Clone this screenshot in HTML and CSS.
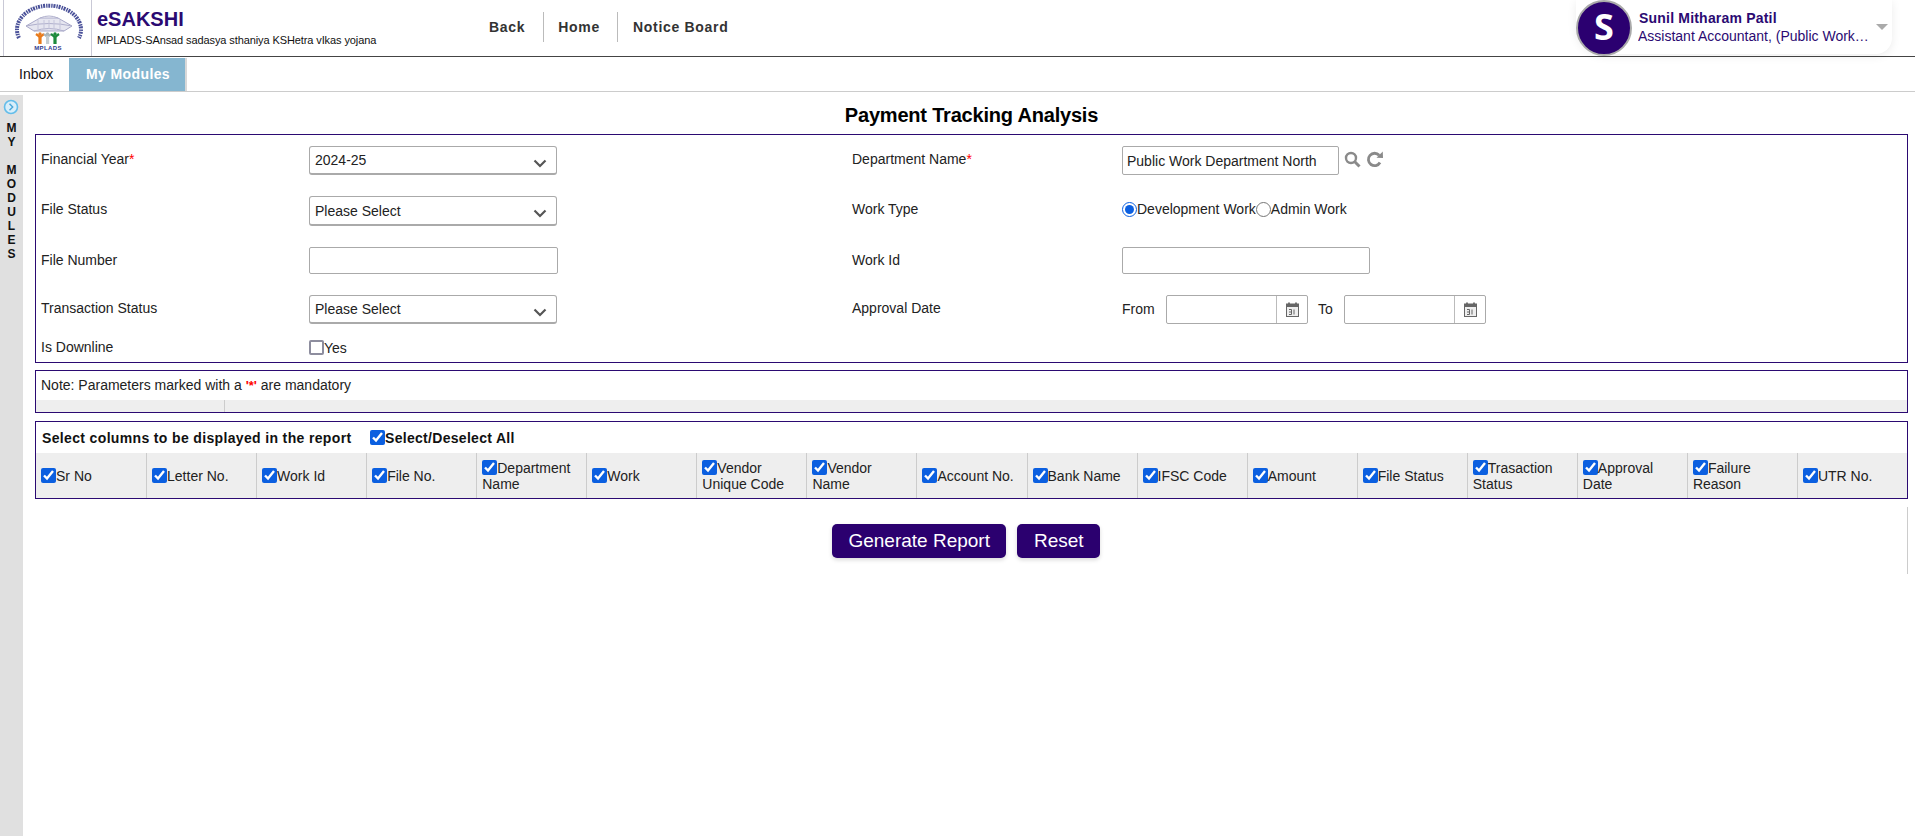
FILE: index.html
```html
<!DOCTYPE html>
<html lang="en">
<head>
<meta charset="utf-8">
<title>Payment Tracking Analysis</title>
<link rel="stylesheet" href="styles.css">
</head>
<body>
<header class="topbar">
  <div class="logo">
    <svg width="87" height="54" viewBox="0 0 87 54">
      <path d="M15 38 A 32 24 0 1 1 75 38" fill="none" stroke="#4a5199" stroke-width="4" stroke-dasharray="2 1 1.4 0.8"/>
      <path d="M22 26 L36 18 H54 L68 26 L60 31 H30 Z" fill="#e6e6f0" stroke="#a9a9c9" stroke-width="1"/>
      <path d="M22 26 Q45 21 68 26 M30 31 Q45 26 60 31 M36 18 Q45 14 54 18" fill="none" stroke="#b0b0cd" stroke-width="1"/>
      <path d="M34 20V29M40 20V29M45 20V29M50 20V29M56 20V29" stroke="#c4c4da" stroke-width="1"/>
      <g fill="none" stroke-width="2.2">
        <path d="M32 34 L36 37 L40 34" stroke="#e87b1c"/>
        <path d="M40 34 L43.5 37 L47 34" stroke="#a9b4b8"/>
        <path d="M47 34 L51 37 L55 34" stroke="#1d8a3c"/>
      </g>
      <rect x="34.4" y="36" width="3.2" height="8" fill="#e87b1c"/>
      <rect x="42" y="36" width="3.2" height="8" fill="#c4ccd0"/>
      <rect x="49.4" y="36" width="3.2" height="8" fill="#1d8a3c"/>
      <circle cx="36" cy="34" r="1.7" fill="#e87b1c"/>
      <circle cx="43.5" cy="34" r="1.7" fill="#a9b4b8"/>
      <circle cx="51" cy="34" r="1.7" fill="#1d8a3c"/>
      <text x="44" y="49.5" class="logo-text" text-anchor="middle">MPLADS</text>
    </svg>
  </div>
  <div class="brand">
    <div class="brand-name">eSAKSHI</div>
    <div class="brand-sub">MPLADS-SAnsad sadasya sthaniya KSHetra vIkas yojana</div>
  </div>
  <nav class="topnav">
    <a class="topnav-item">Back</a>
    <a class="topnav-item">Home</a>
    <a class="topnav-item topnav-last">Notice Board</a>
  </nav>
  <div class="user">
    <div class="avatar">S</div>
    <div class="user-text">
      <div class="user-name">Sunil Mitharam Patil</div>
      <div class="user-role">Assistant Accountant, (Public Works Department North)</div>
    </div>
    <span class="caret"></span>
  </div>
</header>
<div class="tabs">
  <a class="tab">Inbox</a>
  <a class="tab tab-active">My Modules</a>
</div>
<div class="shell">
  <aside class="sidebar">
    <svg class="side-icon" width="16" height="16" viewBox="0 0 16 16">
      <circle cx="8" cy="8" r="6.5" fill="#d8eefa" stroke="#63bdea" stroke-width="1.6"/>
      <path d="M6.5 4.8 L9.7 8 L6.5 11.2" fill="none" stroke="#4aa6d8" stroke-width="1.4"/>
    </svg>
    <div class="side-text">M<br>Y<br><br>M<br>O<br>D<br>U<br>L<br>E<br>S</div>
  </aside>
  <main class="main">
    <h1 class="title">Payment Tracking Analysis</h1>
    <section class="panel form-grid">
      <div class="lbl">Financial Year<span class="req">*</span></div>
      <div class="ctl">
        <div class="select-wrap">
          <select class="select"><option>2024-25</option></select>
          <svg class="chev" width="14" height="9" viewBox="0 0 14 9"><path d="M1.5 1.5 L7 7 L12.5 1.5" fill="none" stroke="#555" stroke-width="2.2"/></svg>
        </div>
      </div>
      <div class="lbl">Department Name<span class="req">*</span></div>
      <div class="ctl ctl-row">
        <input class="input input-dept" type="text" value="Public Work Department North">
        <svg class="icon-search" width="17" height="17" viewBox="0 0 17 17"><circle cx="7" cy="7" r="5" fill="none" stroke="#8a8a8a" stroke-width="2.4"/><path d="M10.8 10.8 L15.5 15.5" stroke="#8a8a8a" stroke-width="3"/></svg>
        <svg class="icon-refresh" width="18" height="17" viewBox="0 0 18 17"><path d="M14 11.5 A6.2 6.2 0 1 1 13.2 4.3" fill="none" stroke="#8a8a8a" stroke-width="2.8"/><path d="M10.5 6.8 L17 7 L16.8 0.6 Z" fill="#8a8a8a"/></svg>
      </div>

      <div class="lbl">File Status</div>
      <div class="ctl">
        <div class="select-wrap select-tall">
          <select class="select"><option>Please Select</option></select>
          <svg class="chev" width="14" height="9" viewBox="0 0 14 9"><path d="M1.5 1.5 L7 7 L12.5 1.5" fill="none" stroke="#555" stroke-width="2.2"/></svg>
        </div>
      </div>
      <div class="lbl">Work Type</div>
      <div class="ctl ctl-row ctl-radios">
        <label class="opt"><input class="radio" type="radio" name="worktype" checked>Development Work</label>
        <label class="opt"><input class="radio" type="radio" name="worktype">Admin Work</label>
      </div>

      <div class="lbl">File Number</div>
      <div class="ctl"><input class="input input-wide" type="text"></div>
      <div class="lbl">Work Id</div>
      <div class="ctl"><input class="input input-id" type="text"></div>

      <div class="lbl">Transaction Status</div>
      <div class="ctl">
        <div class="select-wrap">
          <select class="select"><option>Please Select</option></select>
          <svg class="chev" width="14" height="9" viewBox="0 0 14 9"><path d="M1.5 1.5 L7 7 L12.5 1.5" fill="none" stroke="#555" stroke-width="2.2"/></svg>
        </div>
      </div>
      <div class="lbl">Approval Date</div>
      <div class="ctl ctl-row">
        <span class="date-from">From</span>
        <div class="date">
          <input class="date-input" type="text">
          <span class="date-btn">
            <svg width="13" height="15" viewBox="0 0 13 15"><path d="M3 0.5V3M10 0.5V3" stroke="#555" stroke-width="1.6"/><rect x="0.5" y="2" width="12" height="12.5" fill="#eee" stroke="#666"/><rect x="0.5" y="2" width="12" height="3" fill="#666"/><path d="M3 7.5H5.5V12.5H3M3 10H5.5M8 7.5V12.5" fill="none" stroke="#666"/></svg>
          </span>
        </div>
        <span class="date-to">To</span>
        <div class="date">
          <input class="date-input" type="text">
          <span class="date-btn">
            <svg width="13" height="15" viewBox="0 0 13 15"><path d="M3 0.5V3M10 0.5V3" stroke="#555" stroke-width="1.6"/><rect x="0.5" y="2" width="12" height="12.5" fill="#eee" stroke="#666"/><rect x="0.5" y="2" width="12" height="3" fill="#666"/><path d="M3 7.5H5.5V12.5H3M3 10H5.5M8 7.5V12.5" fill="none" stroke="#666"/></svg>
          </span>
        </div>
      </div>

      <div class="lbl lbl-short">Is Downline</div>
      <div class="ctl"><label class="opt opt-short"><input class="check-empty" type="checkbox">Yes</label></div>
    </section>

    <section class="panel note-panel">
      <div class="note">Note: Parameters marked with a <b class="req-note">'*'</b> are mandatory</div>
      <div class="note-strip"><span class="note-strip-cell"></span></div>
    </section>

    <section class="panel cols-panel">
      <div class="cols-head">
        <span class="cols-title">Select columns to be displayed in the report</span>
        <label class="cols-all"><input class="check" type="checkbox" checked>Select/Deselect All</label>
      </div>
      <div class="cols-grid">
        <label class="col"><span><input class="check" type="checkbox" checked>Sr No</span></label>
        <label class="col"><span><input class="check" type="checkbox" checked>Letter No.</span></label>
        <label class="col"><span><input class="check" type="checkbox" checked>Work Id</span></label>
        <label class="col"><span><input class="check" type="checkbox" checked>File No.</span></label>
        <label class="col"><span><input class="check" type="checkbox" checked>Department Name</span></label>
        <label class="col"><span><input class="check" type="checkbox" checked>Work</span></label>
        <label class="col"><span><input class="check" type="checkbox" checked>Vendor Unique Code</span></label>
        <label class="col"><span><input class="check" type="checkbox" checked>Vendor Name</span></label>
        <label class="col"><span><input class="check" type="checkbox" checked>Account No.</span></label>
        <label class="col"><span><input class="check" type="checkbox" checked>Bank Name</span></label>
        <label class="col"><span><input class="check" type="checkbox" checked>IFSC Code</span></label>
        <label class="col"><span><input class="check" type="checkbox" checked>Amount</span></label>
        <label class="col"><span><input class="check" type="checkbox" checked>File Status</span></label>
        <label class="col"><span><input class="check" type="checkbox" checked>Trasaction Status</span></label>
        <label class="col"><span><input class="check" type="checkbox" checked>Approval Date</span></label>
        <label class="col"><span><input class="check" type="checkbox" checked>Failure Reason</span></label>
        <label class="col"><span><input class="check" type="checkbox" checked>UTR No.</span></label>
      </div>
    </section>

    <div class="actions">
      <button class="btn" type="button">Generate Report</button>
      <button class="btn" type="button">Reset</button>
    </div>
  </main>
</div>
</body>
</html>
```

FILE: styles.css
```css
* { box-sizing: border-box; }
html, body { height: 100%; }
body {
  margin: 0;
  background: #fff;
  color: #222;
  font-family: "Liberation Sans", Arial, sans-serif;
  font-size: 14px;
  overflow: hidden;
}

/* header */
.topbar {
  display: flex;
  align-items: flex-start;
  height: 57px;
  border-bottom: 1px solid #444;
}
.logo {
  width: 89px;
  height: 56px;
  margin-left: 3px;
  border-left: 1px solid #c9c9d6;
  border-right: 1px solid #c9c9d6;
}
.logo-text { font: bold 6px "Liberation Sans", Arial, sans-serif; fill: #2f3a8f; letter-spacing: 0.4px; }
.brand { width: 397px; padding: 8px 0 0 5px; }
.brand-name { color: #2b0a72; font-size: 20px; font-weight: bold; line-height: 23px; }
.brand-sub { color: #111; font-size: 11px; line-height: 13px; margin-top: 3px; letter-spacing: -0.1px; white-space: nowrap; }
.topnav { display: flex; margin-top: 12px; }
.topnav-item {
  height: 30px;
  line-height: 30px;
  padding: 0 17.5px 0 14.5px;
  border-right: 1px solid #bbb;
  color: #333;
  font-size: 14px;
  font-weight: bold;
  letter-spacing: 0.7px;
}
.topnav-item:first-child { padding-left: 0; }
.topnav-last { border-right: 0; }
.user {
  display: flex;
  align-items: flex-start;
  position: relative;
  width: 316px;
  height: 54px;
  margin-left: auto;
  margin-right: 23px;
  border-radius: 0 0 16px 28px;
  background: #fff;
  box-shadow: 0 2px 10px rgba(0, 0, 0, 0.08);
}
.avatar {
  flex: none;
  width: 56px;
  height: 56px;
  border: 2px solid #aaa;
  border-radius: 50%;
  background: #2b0070;
  color: #fff;
  font-family: "Open Sans", sans-serif;
  font-size: 36px;
  font-weight: bold;
  line-height: 50px;
  text-align: center;
}
.user-text { width: 239px; padding: 10px 0 0 6px; color: #2b0a72; }
.user-name { margin-left: 1px; font-weight: bold; font-size: 14px; line-height: 17px; letter-spacing: 0.2px; white-space: nowrap; }
.user-role { font-size: 14px; line-height: 19px; white-space: nowrap; overflow: hidden; text-overflow: ellipsis; }
.caret {
  position: absolute;
  right: 4px;
  top: 24px;
  border-top: 6px solid #aaa;
  border-left: 6px solid transparent;
  border-right: 6px solid transparent;
}

/* tabs */
.tabs {
  display: flex;
  height: 35px;
  border-bottom: 1px solid #ccc;
}
.tab {
  height: 34px;
  line-height: 34px;
  color: #111;
  font-size: 14px;
}
.tab:first-child { width: 69px; padding-left: 19px; }
.tab-active {
  width: 118px;
  margin-top: 1px;
  height: 33px;
  padding-left: 2px;
  line-height: 32px;
  background: #85b6d0;
  border-right: 2px solid #d8d8d8;
  color: #fff;
  font-weight: bold;
  letter-spacing: 0.4px;
  text-align: center;
}

/* shell */
.shell { display: flex; margin-top: 3px; height: 741px; }
.sidebar { flex: none; width: 23px; background: #e0e0e0; text-align: center; }
.side-icon { display: block; margin: 4px 0 0 3px; }
.side-text { margin-top: 6px; font-size: 12px; font-weight: bold; line-height: 14px; color: #111; }
.main { flex: 1; min-width: 0; padding: 0 7px 0 12px; }
.title { margin: 0; height: 39px; padding-top: 1px; color: #000; font-size: 20px; font-weight: bold; line-height: 39px; letter-spacing: -0.2px; text-align: center; }

/* panels */
.panel { border: 1px solid #2b0a72; margin-bottom: 8px; }

/* form */
.form-grid {
  display: grid;
  grid-template-columns: 268px 543px 270px 1fr;
  grid-template-rows: 50px 51px 48px 46px 20px;
  height: 229px;
  margin-bottom: 7px;
  padding: 11px 0 0 5px;
}
.lbl { line-height: 26px; color: #222; }
.lbl-short { line-height: 13px; }
.req { color: #f00; }
.ctl-row { display: flex; align-items: flex-start; }
.ctl-radios { height: 26px; align-items: center; }
.select-wrap { position: relative; width: 248px; height: 29px; }
.select-tall { height: 30px; }
.select {
  display: block;
  width: 100%;
  height: 100%;
  padding: 0 30px 0 5px;
  border: 1px solid #aaa;
  border-bottom-width: 2px;
  border-radius: 3px;
  background: #fff;
  color: #222;
  font: 14px "Liberation Sans", Arial, sans-serif;
  appearance: none;
}
.chev { position: absolute; right: 10px; top: 13px; }
.input {
  display: block;
  border: 1px solid #aaa;
  border-radius: 2px;
  background: #fff;
  color: #222;
  padding: 0 4px;
  font: 14px "Liberation Sans", Arial, sans-serif;
}
.input-wide { width: 249px; height: 27px; }
.input-id { width: 248px; height: 27px; }
.input-dept { width: 217px; height: 29px; }
.icon-search { margin: 5px 0 0 5px; }
.icon-refresh { margin: 5px 0 0 5px; }
.opt { display: inline-flex; align-items: center; white-space: nowrap; }
.opt-short { height: 13px; }
.radio { width: 15px; height: 15px; margin: 0; accent-color: #0b5fe0; }
.check { width: 15px; height: 15px; margin: 0; accent-color: #0b5fe0; vertical-align: -2px; }
.check-empty {
  width: 15px;
  height: 15px;
  margin: 0;
  border: 2px solid #8d8d9e;
  border-radius: 2px;
  background: #fff;
  appearance: none;
}
.date-from { width: 44px; line-height: 29px; }
.date-to { width: 26px; margin-left: 10px; line-height: 29px; }
.date {
  display: flex;
  width: 142px;
  height: 29px;
  border: 1px solid #aaa;
  border-radius: 2px;
}
.date-input { flex: 1; min-width: 0; border: 0; padding: 0 4px; background: transparent; }
.date-btn {
  display: flex;
  flex: none;
  align-items: center;
  justify-content: center;
  width: 31px;
  border-left: 1px solid #bbb;
}

/* note */
.note-panel { height: 43px; }
.note { height: 29px; padding-left: 5px; line-height: 29px; color: #222; }
.req-note { color: #f00; font-size: 13px; }
.note-strip { height: 12px; background: #eee; }
.note-strip-cell { display: block; width: 189px; height: 12px; border-right: 1px solid #ccc; }

/* columns */
.cols-panel { height: 78px; }
.cols-head { display: flex; height: 31px; align-items: center; padding-left: 6px; font-weight: bold; color: #111; }
.cols-title { width: 328px; letter-spacing: 0.35px; white-space: nowrap; }
.cols-all { letter-spacing: 0.3px; white-space: nowrap; }
.cols-grid { display: grid; grid-template-columns: repeat(17, 1fr); height: 45px; background: #eee; }
.col {
  display: flex;
  align-items: center;
  padding: 0 4px 0 5px;
  border-left: 1px solid #ccc;
  line-height: 16px;
  color: #222;
}
.col:first-child { border-left: 0; }

/* actions */
.actions {
  display: flex;
  justify-content: center;
  gap: 11px;
  height: 67px;
  padding: 17px 10px 0 0;
  border-right: 1px solid #ccc;
}
.btn {
  height: 34px;
  padding: 0 16.5px;
  border: 0;
  border-radius: 5px;
  background: #2b006f;
  box-shadow: 0 2px 4px rgba(0, 0, 0, 0.15);
  color: #fff;
  font: 19px "Liberation Sans", Arial, sans-serif;
}
```
